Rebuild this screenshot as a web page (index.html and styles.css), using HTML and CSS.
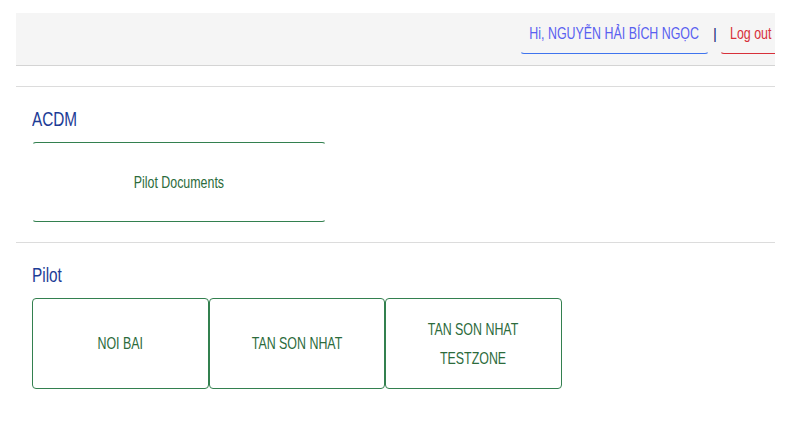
FILE: index.html
```html
<!DOCTYPE html>
<html lang="vi">
    <head>
        <meta charset="utf-8">
        <link rel="stylesheet" href="styles.css">
    </head>
    <body>
    <div class="page">
        <div class="topbar">
            <a class="btn-user"><span class="txt">Hi, NGUYỄN HẢI BÍCH NGỌC</span></a>
            <span class="sep">|</span>
            <a class="btn-logout"><span class="txt txt-left">Log out</span></a>
        </div>
        <hr class="line">
        <h3 class="group-title"><span class="txt txt-left">ACDM</span></h3>
        <ul class="tiles">
            <li class="tile tile-wide"><span class="txt">Pilot Documents</span></li>
        </ul>
        <hr class="line">
        <h3 class="group-title"><span class="txt txt-left">Pilot</span></h3>
        <ul class="tiles">
            <li class="tile"><span class="txt">NOI BAI</span></li>
            <li class="tile"><span class="txt">TAN SON NHAT</span></li>
            <li class="tile"><span class="txt">TAN SON NHAT<br>TESTZONE</span></li>
        </ul>
    </div>
    </body>
</html>
```
FILE: styles.css
```css
body{
    margin:0;
    font-family:"Liberation Sans",Arial,sans-serif;
    font-size:17px;
    background:#fff;
}
ul{
    padding:0;
    margin:0;
    list-style:none;
}
/* the screen uses a narrow face, squeeze the text */
.txt{
    display:inline-block;
    white-space:nowrap;
    transform:scaleX(0.73);
}
.txt-left{
    transform-origin:left center;
}
.page{
    margin:13px 10px 0 16px;
}
.topbar{
    height:52px;
    background:#f5f5f5;
    border-bottom:1px solid #d4d4d4;
    display:flex;
    justify-content:flex-end;
    align-items:flex-start;
    overflow:hidden;
}
.btn-user,
.btn-logout{
    display:flex;
    justify-content:center;
    flex-shrink:0;
    box-sizing:border-box;
    height:41px;
    line-height:40px;
    border:1px solid transparent;
    border-radius:4px;
}
.btn-user{
    width:189px;
    color:#5960f0;
    border-bottom-color:#3f74ee;
}
.btn-logout{
    width:62px;
    justify-content:flex-start;
    padding-left:9px;
    margin-right:-7px;
    color:#d7303a;
    border-bottom-color:#d7303a;
}
.sep{
    color:#1f2a80;
    font-size:15px;
    line-height:41px;
    margin:0 3px 0 4px;
}
.line{
    border:none;
    border-top:1px solid #dcdcdc;
    margin:20px 0 0;
}
.group-title{
    margin:20px 0 12px 16px;
    font-size:21px;
    line-height:23px;
    font-weight:normal;
    color:#1d3c96;
}
.tiles{
    display:flex;
    margin-left:16px;
}
.tile{
    box-sizing:border-box;
    width:176.5px;
    height:91px;
    border:1px solid #33804f;
    border-radius:4px;
    display:flex;
    align-items:center;
    justify-content:center;
    text-align:center;
    line-height:29px;
    color:#2c6b3c;
}
.tile-wide{
    width:294px;
    height:80px;
    border-left-color:transparent;
    border-right-color:transparent;
}
```
